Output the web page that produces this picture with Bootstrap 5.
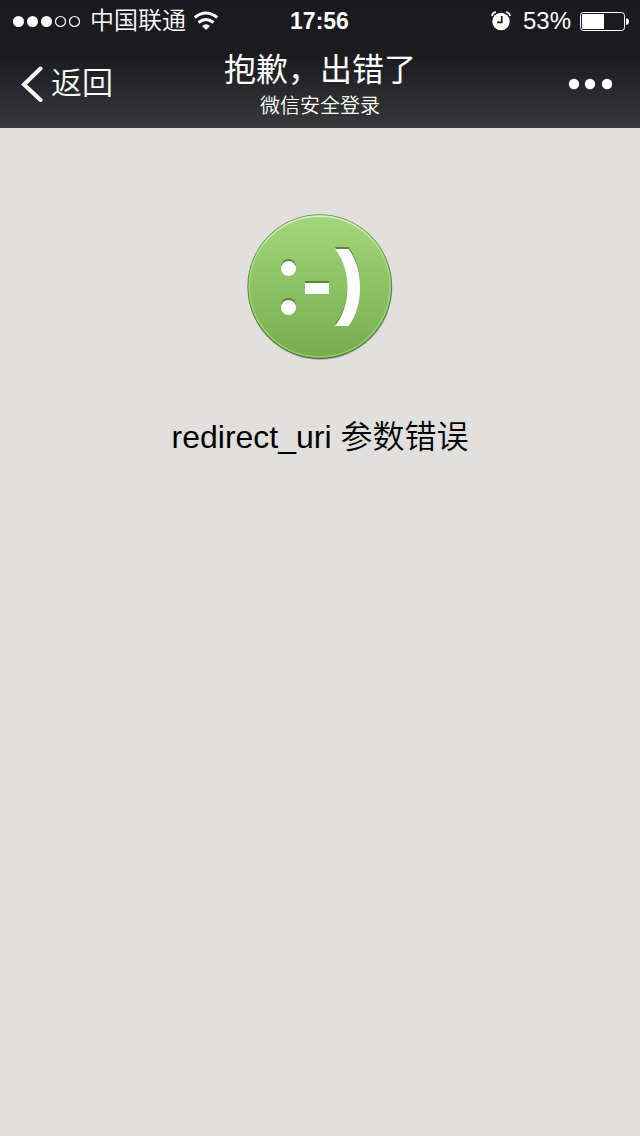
<!DOCTYPE html>
<html lang="zh-CN">
<head>
<meta charset="utf-8">
<meta name="viewport" content="width=device-width, initial-scale=1">
<title>抱歉，出错了</title>
<link href="https://cdn.jsdelivr.net/npm/bootstrap@5.3.0/dist/css/bootstrap.min.css" rel="stylesheet">
<style>
body { background: #e1e0de; color: #000; font-family: "Liberation Sans", "Noto Sans CJK SC", sans-serif; }
svg { display: block; flex: none; }
.top-area { background: linear-gradient(#1a191f 0%, #1c1b20 45%, #38383a 100%); color: #fff; }
.status-bar, .title-bar { display: grid; grid-template-columns: 1fr auto 1fr; align-items: center; }
.status-bar { height: 40px; padding: 0 11px 0 12px; font-size: 24px; line-height: 42px; }
.title-bar { height: 88px; padding: 0 20px; }
.carrier { font-size: 24px; font-weight: 350; }
.clock { font-size: 23px; margin-right: 2px; }
.back-btn, .more-btn { color: #fff; border: 0; background: none; padding: 0; }
.back-btn { font-size: 31px; font-weight: 350; line-height: 40px; }
.page-heading { padding-top: 4px; }
.page-title { font-size: 32px; line-height: 40px; font-weight: 400; }
.page-sub { font-size: 20px; line-height: 32px; font-weight: 350; }
.message { font-size: 32px; line-height: 54px; font-weight: 350; }
.result { padding-top: 84px; }
</style>
</head>
<body>
<header class="top-area">
  <div class="status-bar">
    <div class="d-flex align-items-center gap-2">
      <svg width="70" height="14" viewBox="0 0 70 14" aria-hidden="true">
        <g fill="#fff"><circle cx="6.500" cy="7.500" r="5.500"/><circle cx="20.500" cy="7.500" r="5.500"/><circle cx="34.500" cy="7.500" r="5.500"/></g>
        <g fill="none" stroke="#fff" stroke-width="1.200"><circle cx="48.500" cy="7.500" r="5"/><circle cx="62.500" cy="7.500" r="5"/></g>
      </svg>
      <span class="carrier">中国联通</span>
      <svg width="26" height="20" viewBox="0 0 26 20" aria-hidden="true">
        <g fill="none" stroke="#fff" stroke-width="3"><path d="M.8 6.500Q12-2.500 23.200 6.500"/><path d="M4.500 11.500Q12 5.500 19.500 11.500"/></g>
        <path d="M8 15Q12 11.500 16 15L12 19Z" fill="#fff"/>
      </svg>
    </div>
    <time class="clock fw-bold text-center">17:56</time>
    <div class="d-flex align-items-center justify-content-end gap-2">
      <svg class="me-1" width="20" height="20" viewBox="0 0 20 20" aria-hidden="true">
        <circle cx="10" cy="10.500" r="8.700" fill="#fff"/>
        <path d="M1 5Q1.500 1.500 5 1.200M19 5Q18.500 1.500 15 1.200" fill="none" stroke="#fff" stroke-width="1.800"/>
        <path d="M10.700 5V11.300H6" fill="none" stroke="#1b1a20" stroke-width="1.700"/>
      </svg>
      <span>53%</span>
      <svg width="50" height="20" viewBox="0 0 50 20" aria-hidden="true">
        <rect x="1.500" y="1.500" width="44" height="18" rx="3" fill="none" stroke="#fff"/>
        <path d="M4 3H25V18H4Q3 18 3 17V4Q3 3 4 3Z" fill="#fff"/>
        <path d="M47 7Q50 7.500 50 10.500T47 14Z" fill="#fff"/>
      </svg>
    </div>
  </div>
  <nav class="title-bar">
    <button type="button" class="back-btn d-flex align-items-center gap-2">
      <svg width="23" height="36" viewBox="0 0 23 36" aria-hidden="true"><path d="M20.500 2.500L4 18.500L20.500 34" fill="none" stroke="#fff" stroke-width="4" stroke-linecap="round"/></svg>
      <span>返回</span>
    </button>
    <div class="page-heading text-center">
      <h1 class="page-title m-0">抱歉，出错了</h1>
      <div class="page-sub">微信安全登录</div>
    </div>
    <button type="button" class="more-btn ms-auto me-2" aria-label="更多">
      <svg width="44" height="12" viewBox="0 0 44 12" fill="#fff"><circle cx="6" cy="6" r="5.200"/><circle cx="22" cy="6" r="5.200"/><circle cx="39" cy="6" r="5.200"/></svg>
    </button>
  </nav>
</header>
<main class="result container-fluid d-flex flex-column align-items-center">
  <svg width="148" height="150" viewBox="0 0 148 150" role="img" aria-label="笑脸">
    <defs>
      <linearGradient id="face" x2="0" y2="1"><stop stop-color="#a3d77b"/><stop offset="1" stop-color="#76ad4c"/></linearGradient>
      <linearGradient id="rim" x2="0" y2="1"><stop stop-color="#dcf4c8"/><stop offset=".3" stop-color="#a6d783"/><stop offset="1" stop-color="#8fcb64"/></linearGradient>
      <linearGradient id="edge" x2="0" y2="1"><stop stop-color="#6f9f4c"/><stop offset="1" stop-color="#3f6b24"/></linearGradient>
      <g id="smile">
        <circle cx="42.500" cy="56.500" r="7.600"/><circle cx="42.500" cy="95.500" r="7.600"/>
        <path d="M59 71H83V82H59Z"/>
        <path d="M89 37H102.500C118 57 118 94 102.500 114H89C105.500 94 105.500 57 89 37Z"/>
      </g>
    </defs>
    <circle cx="74" cy="75.500" r="72.300" fill="#000" opacity=".3"/>
    <circle cx="73.700" cy="74.500" r="71.800" fill="url(#face)" stroke="url(#edge)"/>
    <circle cx="73.700" cy="74.500" r="70.300" fill="none" stroke="url(#rim)" stroke-width="1.600"/>
    <use href="#smile" y="-2" fill="#598639"/>
    <use href="#smile" fill="#fff"/>
  </svg>
  <p class="message text-center mt-5 mb-0">redirect_uri 参数错误</p>
</main>
<script src="https://cdn.jsdelivr.net/npm/bootstrap@5.3.0/dist/js/bootstrap.bundle.min.js"></script>
</body>
</html>
